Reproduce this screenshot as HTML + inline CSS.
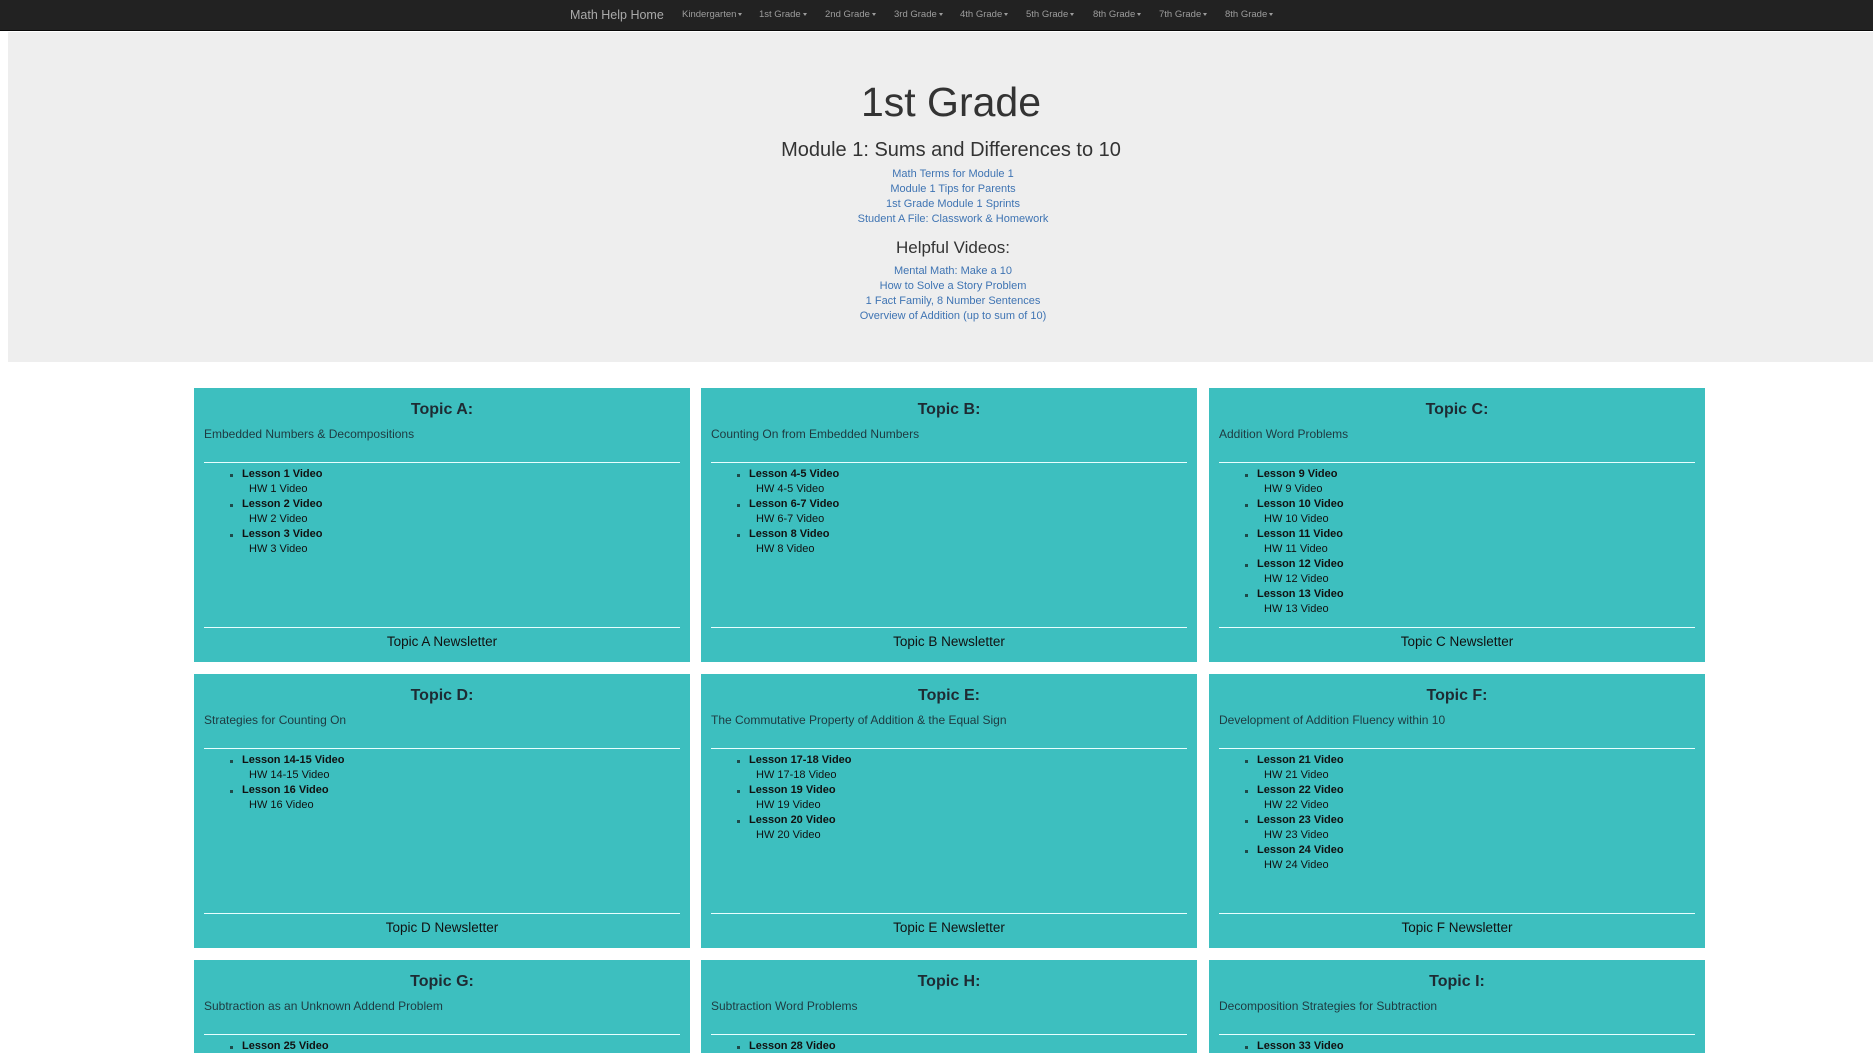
<!DOCTYPE html>
<html><head><meta charset="utf-8"><style>
*{margin:0;padding:0;box-sizing:border-box}
html{width:1873px;height:1053px;overflow:hidden}
body{width:1873px;height:1053px;overflow:hidden;background:#fff;font-family:"Liberation Sans",Arial,sans-serif;position:relative}
.nav{position:absolute;left:0;top:0;width:1873px;height:31px;background:#222;border-bottom:1px solid #080808}
.nav span{position:absolute;top:1px;line-height:28px;color:#9d9d9d;font-size:9.5px}
.nav .brand{font-size:12.5px;color:#aaa}
.caret{display:inline-block;border-top:3px solid #9d9d9d;border-left:2px solid transparent;border-right:2px solid transparent;vertical-align:middle;margin-left:2px}
.jumbo{position:absolute;left:8px;top:32px;width:1865px;height:330px;background:#eee;text-align:center;color:#333}
.jumbo .c{position:absolute;left:0;width:1890px;text-align:center}
.jumbo h1{font-weight:normal;font-size:41px}
.jumbo a{color:#3f74b3;text-decoration:none;font-size:11px;display:block;line-height:15px}
.card{position:absolute;width:496px;height:274px;background:#3dbfbf;color:#111}
.card .t{position:absolute;top:13px;width:100%;text-align:center;font-weight:bold;font-size:16px;color:#1e2b33}
.card .s{position:absolute;top:39px;left:10px;font-size:12px;color:#1e3a40}
.card .d1,.card .d2{position:absolute;left:10px;right:10px;height:1px;background:#e8ffff}
.card .d1{top:74px}.card .d2{top:239px}
.card ul{position:absolute;top:79px;left:48px;list-style:none;font-size:11px;line-height:15px}
.card li{position:relative}
.card li b::before{content:"";position:absolute;left:-12px;top:7px;width:3px;height:3px;background:#1e4a4a}
.card li div{padding-left:7px}
.card .n{position:absolute;width:100%;text-align:center;font-size:13.5px;line-height:20px;top:244px;color:#111}
</style></head><body>
<div class="nav">
<span class="brand" style="left:570px">Math Help Home</span>
<span style="left:682px">Kindergarten<i class="caret"></i></span>
<span style="left:759px">1st Grade<i class="caret"></i></span>
<span style="left:825px">2nd Grade<i class="caret"></i></span>
<span style="left:894px">3rd Grade<i class="caret"></i></span>
<span style="left:960px">4th Grade<i class="caret"></i></span>
<span style="left:1026px">5th Grade<i class="caret"></i></span>
<span style="left:1093px">8th Grade<i class="caret"></i></span>
<span style="left:1159px">7th Grade<i class="caret"></i></span>
<span style="left:1225px">8th Grade<i class="caret"></i></span>
</div>
<div class="jumbo">
<div class="c" style="top:47px;left:-2px"><h1>1st Grade</h1></div>
<div class="c" style="top:107px;left:-2px;font-size:20px">Module 1: Sums and Differences to 10</div>
<div class="c" style="top:135px;left:0px"><a>Math Terms for Module 1</a><a>Module 1 Tips for Parents</a><a>1st Grade Module 1 Sprints</a><a>Student A File: Classwork &amp; Homework</a></div>
<div class="c" style="top:206px;left:0px;font-size:17px">Helpful Videos:</div>
<div class="c" style="top:232px;left:0px"><a>Mental Math: Make a 10</a><a>How to Solve a Story Problem</a><a>1 Fact Family, 8 Number Sentences</a><a>Overview of Addition (up to sum of 10)</a></div>
</div>

<div class="card" style="left:194px;top:388px"><div class="t">Topic A:</div><div class="s">Embedded Numbers &amp; Decompositions</div><div class="d1"></div>
<ul><li><b>Lesson 1 Video</b><div>HW 1 Video</div></li><li><b>Lesson 2 Video</b><div>HW 2 Video</div></li><li><b>Lesson 3 Video</b><div>HW 3 Video</div></li></ul>
<div class="d2"></div><div class="n">Topic A Newsletter</div></div>

<div class="card" style="left:701px;top:388px"><div class="t">Topic B:</div><div class="s">Counting On from Embedded Numbers</div><div class="d1"></div>
<ul><li><b>Lesson 4-5 Video</b><div>HW 4-5 Video</div></li><li><b>Lesson 6-7 Video</b><div>HW 6-7 Video</div></li><li><b>Lesson 8 Video</b><div>HW 8 Video</div></li></ul>
<div class="d2"></div><div class="n">Topic B Newsletter</div></div>

<div class="card" style="left:1209px;top:388px"><div class="t">Topic C:</div><div class="s">Addition Word Problems</div><div class="d1"></div>
<ul><li><b>Lesson 9 Video</b><div>HW 9 Video</div></li><li><b>Lesson 10 Video</b><div>HW 10 Video</div></li><li><b>Lesson 11 Video</b><div>HW 11 Video</div></li><li><b>Lesson 12 Video</b><div>HW 12 Video</div></li><li><b>Lesson 13 Video</b><div>HW 13 Video</div></li></ul>
<div class="d2"></div><div class="n">Topic C Newsletter</div></div>

<div class="card" style="left:194px;top:674px"><div class="t">Topic D:</div><div class="s">Strategies for Counting On</div><div class="d1"></div>
<ul><li><b>Lesson 14-15 Video</b><div>HW 14-15 Video</div></li><li><b>Lesson 16 Video</b><div>HW 16 Video</div></li></ul>
<div class="d2"></div><div class="n">Topic D Newsletter</div></div>

<div class="card" style="left:701px;top:674px"><div class="t">Topic E:</div><div class="s">The Commutative Property of Addition &amp; the Equal Sign</div><div class="d1"></div>
<ul><li><b>Lesson 17-18 Video</b><div>HW 17-18 Video</div></li><li><b>Lesson 19 Video</b><div>HW 19 Video</div></li><li><b>Lesson 20 Video</b><div>HW 20 Video</div></li></ul>
<div class="d2"></div><div class="n">Topic E Newsletter</div></div>

<div class="card" style="left:1209px;top:674px"><div class="t">Topic F:</div><div class="s">Development of Addition Fluency within 10</div><div class="d1"></div>
<ul><li><b>Lesson 21 Video</b><div>HW 21 Video</div></li><li><b>Lesson 22 Video</b><div>HW 22 Video</div></li><li><b>Lesson 23 Video</b><div>HW 23 Video</div></li><li><b>Lesson 24 Video</b><div>HW 24 Video</div></li></ul>
<div class="d2"></div><div class="n">Topic F Newsletter</div></div>

<div class="card" style="left:194px;top:960px;height:93px"><div class="t">Topic G:</div><div class="s">Subtraction as an Unknown Addend Problem</div><div class="d1"></div>
<ul><li><b>Lesson 25 Video</b></li></ul></div>

<div class="card" style="left:701px;top:960px;height:93px"><div class="t">Topic H:</div><div class="s">Subtraction Word Problems</div><div class="d1"></div>
<ul><li><b>Lesson 28 Video</b></li></ul></div>

<div class="card" style="left:1209px;top:960px;height:93px"><div class="t">Topic I:</div><div class="s">Decomposition Strategies for Subtraction</div><div class="d1"></div>
<ul><li><b>Lesson 33 Video</b></li></ul></div>
</body></html>
